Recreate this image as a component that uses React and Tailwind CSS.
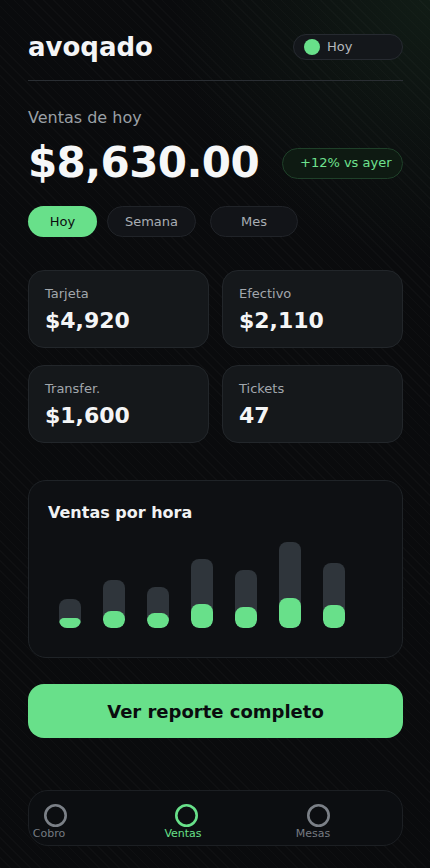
import React from 'react';

const stats = [
  { label: 'Tarjeta', value: '$4,920' },
  { label: 'Efectivo', value: '$2,110' },
  { label: 'Transfer.', value: '$1,600' },
  { label: 'Tickets', value: '47' },
];

// gray track height / green fill height, px
const bars = [
  [29, 10],
  [48, 17],
  [41, 15],
  [69, 24],
  [58, 21],
  [86, 30],
  [65, 23],
];

function Ring({ active }) {
  return (
    <svg width="23" height="23" viewBox="0 0 23 23" fill="none">
      <circle cx="11.5" cy="11.5" r="10.2" stroke={active ? '#68e08a' : '#7b8087'} strokeWidth="2.6" />
    </svg>
  );
}

export default function App() {
  return (
    <div className="relative min-h-screen w-full overflow-hidden bg-[#0a0b0d] font-['DejaVu_Sans',sans-serif]">
      {/* glow + stripes */}
      <div className="pointer-events-none absolute inset-0 bg-[radial-gradient(circle_at_100%_0%,rgba(80,180,100,0.10)_0px,rgba(80,180,100,0.04)_140px,transparent_260px)]" />
      <div className="pointer-events-none absolute inset-0 bg-[repeating-linear-gradient(45deg,rgba(255,255,255,0.018)_0px,rgba(255,255,255,0.018)_1px,transparent_1px,transparent_7px)]" />

      <div className="relative pl-7 pr-[27px] pt-[34px] pb-[22px]">
        {/* header */}
        <div className="flex h-[26px] items-center justify-between">
          <h1 className="text-[26px] font-bold leading-none text-[#f4f5f6]">avoqado</h1>
          <div className="flex h-[26px] w-[110px] items-center gap-[7px] rounded-full border border-[#262a30] bg-[#14171b] pl-[10px]">
            <span className="h-4 w-4 rounded-full bg-[#68e08a]" />
            <span className="text-[13px] text-[#b4b8bd]">Hoy</span>
          </div>
        </div>

        <div className="mt-5 h-px bg-[#2a2e33]" />

        {/* total */}
        <p className="mt-[25px] text-[16px] leading-6 text-[#9aa0a6]">Ventas de hoy</p>
        <div className="mt-3 flex items-center justify-between">
          <span className="text-[42px] font-bold leading-none tracking-[-0.6px] text-[#f6f7f8]">$8,630.00</span>
          <span className="flex h-[31px] w-[121px] items-center rounded-full border border-[#1f4029] bg-[#0e1a12] pl-[17px] text-[13px] text-[#6ee28f]">
            +12% vs ayer
          </span>
        </div>

        {/* period tabs */}
        <div className="mt-[22px] flex items-center">
          <button className="flex h-[31px] w-[69px] items-center justify-center rounded-full bg-[#68e08a] text-[13px] text-[#0b0d0f]">Hoy</button>
          <button className="ml-[10px] flex h-[31px] w-[89px] items-center justify-center rounded-full border border-[#202328] bg-[#121418] text-[13px] text-[#a8adb3]">Semana</button>
          <button className="ml-[14px] flex h-[31px] w-[88px] items-center justify-center rounded-full border border-[#202328] bg-[#121418] text-[13px] text-[#a8adb3]">Mes</button>
        </div>

        {/* stats */}
        <div className="mt-[33px] grid grid-cols-2 gap-x-[13px] gap-y-[17px]">
          {stats.map((s) => (
            <div key={s.label} className="h-[78px] rounded-2xl border border-[#22262a] bg-[#15181b] pl-4 pt-[14px]">
              <p className="text-[13px] leading-[18px] text-[#a2a7ad]">{s.label}</p>
              <p className="mt-1 text-[22px] font-bold leading-7 text-[#f4f5f6]">{s.value}</p>
            </div>
          ))}
        </div>

        {/* chart */}
        <div className="mt-[37px] rounded-[18px] border border-[#1f2327] bg-[#0e1013] px-[19px] pt-5 pb-[29px]">
          <h2 className="text-[16px] font-bold leading-6 text-[#f1f2f3]">Ventas por hora</h2>
          <div className="mt-[17px] flex h-[86px] items-end gap-[22px] pl-[11px]">
            {bars.map(([h, g], i) => (
              <div key={i} className="relative w-[22px] overflow-hidden rounded-lg bg-[#2f353b]" style={{ height: h }}>
                <div className="absolute bottom-0 left-0 w-full rounded-lg bg-[#68e08a]" style={{ height: g }} />
              </div>
            ))}
          </div>
        </div>

        <button className="mt-[26px] flex h-[54px] w-full items-center justify-center rounded-2xl bg-[#68e08a] text-[18px] font-bold text-[#0a0c0e]">
          Ver reporte completo
        </button>

        {/* bottom nav */}
        <nav className="mt-[52px] flex h-[56px] items-start rounded-[20px] border border-[#1c1f23] bg-[#0c0e11] pt-[13px]">
          <div className="ml-[-2px] flex w-[44px] flex-col items-center">
            <span className="ml-[12px]"><Ring /></span>
            <span className="text-[11px] leading-[14px] text-[#767b82]">Cobro</span>
          </div>
          <div className="ml-[90px] flex w-[44px] flex-col items-center">
            <span className="ml-[7px]"><Ring active /></span>
            <span className="text-[11px] leading-[14px] text-[#68e08a]">Ventas</span>
          </div>
          <div className="ml-[86px] flex w-[44px] flex-col items-center">
            <span className="ml-[10px]"><Ring /></span>
            <span className="text-[11px] leading-[14px] text-[#767b82]">Mesas</span>
          </div>
        </nav>
      </div>
    </div>
  );
}
